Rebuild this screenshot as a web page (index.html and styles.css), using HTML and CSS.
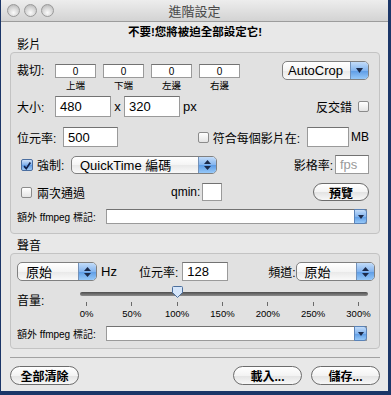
FILE: index.html
```html
<!DOCTYPE html>
<html lang="zh-Hant">
<head>
  <meta charset="UTF-8" />
  <title>進階設定</title>
  <link rel="stylesheet" href="styles.css">
</head>
<body>

  <div class="window">
    <div class="titlebar">
      <div class="lights">
        <span class="light"></span>
        <span class="light"></span>
        <span class="light"></span>
      </div>
      <div class="title">進階設定</div>
      <div></div>
    </div>

    <div class="content">
      <div class="notice">不要!您將被迫全部設定它!</div>

      <!-- 影片 -->
      <div class="group-title">影片</div>
      <div class="group">
        <div class="row crop-row">
          <span class="crop-label">裁切:</span>
          <div class="crop-fields">
            <div class="crop"><div class="field crop-field">0</div><span class="crop-name">上端</span></div>
            <div class="crop"><div class="field crop-field">0</div><span class="crop-name">下端</span></div>
            <div class="crop"><div class="field crop-field">0</div><span class="crop-name">左邊</span></div>
            <div class="crop"><div class="field crop-field">0</div><span class="crop-name">右邊</span></div>
          </div>
          <div class="popup autocrop">
            <span class="popup-text">AutoCrop</span>
            <span class="popup-arrow">
              <svg width="7" height="5" viewBox="0 0 7 5"><path d="M0 0h7L3.5 5z" fill="#1b2a4a"/></svg>
            </span>
          </div>
        </div>

        <div class="row size-row">
          <span class="size-label">大小:</span>
          <div class="field size-field">480</div>
          <span class="times">x</span>
          <div class="field size-field">320</div>
          <span class="unit">px</span>
          <span class="push">反交錯</span>
          <span class="checkbox deint"></span>
        </div>

        <div class="row bitrate-row">
          <span class="bitrate-label">位元率:</span>
          <div class="field bitrate-field">500</div>
          <div class="fit push">
            <span class="checkbox"></span>
            <span class="fit-label">符合每個影片在:</span>
            <div class="field mb-field"></div>
            <span class="mb">MB</span>
          </div>
        </div>

        <div class="row force-row">
          <span class="checkbox checked">
            <svg width="12" height="12" viewBox="0 0 12 12"><path d="M2.5 6.2l2.6 3L10 1.8" fill="none" stroke="#10204a" stroke-width="2"/></svg>
          </span>
          <span class="force-label">強制:</span>
          <div class="popup codec">
            <span class="popup-text">QuickTime 編碼</span>
            <span class="popup-arrow">
              <svg width="7" height="10" viewBox="0 0 7 10"><path d="M0 4L3.5 0 7 4zM0 6h7L3.5 10z" fill="#1b2a4a"/></svg>
            </span>
          </div>
          <span class="push">影格率:</span>
          <div class="field fps-field"><span class="placeholder">fps</span></div>
        </div>

        <div class="row pass-row">
          <span class="checkbox"></span>
          <span class="pass-label">兩次通過</span>
          <span>qmin:</span>
          <div class="field qmin-field"></div>
          <button class="button preview">預覽</button>
        </div>

        <div class="row extra-row">
          <span class="extra-label">額外 ffmpeg 標記:</span>
          <div class="field combo">
            <span class="combo-arrow">
              <svg width="6" height="4" viewBox="0 0 6 4"><path d="M0 0h6L3 4z" fill="#1b2a4a"/></svg>
            </span>
          </div>
        </div>
      </div>

      <!-- 聲音 -->
      <div class="group-title audio-title">聲音</div>
      <div class="group audio-group">
        <div class="row audio-row">
          <div class="popup rate">
            <span class="popup-text">原始</span>
            <span class="popup-arrow">
              <svg width="7" height="10" viewBox="0 0 7 10"><path d="M0 4L3.5 0 7 4zM0 6h7L3.5 10z" fill="#1b2a4a"/></svg>
            </span>
          </div>
          <span class="hz">Hz</span>
          <span class="abitrate-label">位元率:</span>
          <div class="field abitrate-field">128</div>
          <span class="channel-label">頻道:</span>
          <div class="popup channel">
            <span class="popup-text">原始</span>
            <span class="popup-arrow">
              <svg width="7" height="10" viewBox="0 0 7 10"><path d="M0 4L3.5 0 7 4zM0 6h7L3.5 10z" fill="#1b2a4a"/></svg>
            </span>
          </div>
        </div>

        <div class="row volume-row">
          <span class="volume-label">音量:</span>
          <div class="slider">
            <div class="track"></div>
            <svg class="thumb" width="11" height="12" viewBox="0 0 11 12">
              <path d="M1.5 0.5h8a1 1 0 0 1 1 1v5L5.5 11.5 0.5 6.5v-5a1 1 0 0 1 1-1z" fill="#d6e6fa" stroke="#4c6f9c"/>
            </svg>
            <div class="ticks">
              <div class="tick-col"><span class="tick"></span><span class="tick-label">0%</span></div>
              <div class="tick-col"><span class="tick"></span><span class="tick-label">50%</span></div>
              <div class="tick-col"><span class="tick"></span><span class="tick-label">100%</span></div>
              <div class="tick-col"><span class="tick"></span><span class="tick-label">150%</span></div>
              <div class="tick-col"><span class="tick"></span><span class="tick-label">200%</span></div>
              <div class="tick-col"><span class="tick"></span><span class="tick-label">250%</span></div>
              <div class="tick-col"><span class="tick"></span><span class="tick-label">300%</span></div>
            </div>
          </div>
        </div>

        <div class="row extra-row audio-extra">
          <span class="extra-label">額外 ffmpeg 標記:</span>
          <div class="field combo">
            <span class="combo-arrow">
              <svg width="6" height="4" viewBox="0 0 6 4"><path d="M0 0h6L3 4z" fill="#1b2a4a"/></svg>
            </span>
          </div>
        </div>
      </div>

      <hr class="separator">

      <div class="footer">
        <button class="button">全部清除</button>
        <button class="button load">載入...</button>
        <button class="button save">儲存...</button>
      </div>
    </div>
  </div>

</body>
</html>
```

FILE: styles.css
```css
:root {
  --window-bg: #e8e8e8;
  --group-bg: #e1e1e1;
  --group-border: #c3c3c3;
  --field-border: #9a9a9a;
  --font-main: "Liberation Sans", "Noto Sans CJK TC", sans-serif;
}

body {
  margin: 0;
  background: #1b3668;
  font-family: var(--font-main);
  font-size: 12px;
  color: #000;
}

.window {
  margin-left: 1px;
  width: 387px;
  height: 391px;
  background: var(--window-bg);
  overflow: hidden;
}

/* barre de titre */
.titlebar {
  height: 21px;
  border-bottom: 1px solid #9c9c9c;
  background: linear-gradient(#ededed, #d3d3d3);
  display: grid;
  grid-template-columns: 1fr auto 1fr;
  align-items: center;
}

.lights {
  display: flex;
  gap: 4px;
  padding-left: 6px;
}

.light {
  width: 11px;
  height: 11px;
  border-radius: 50%;
  border: 1px solid #9a9a9a;
  background: radial-gradient(circle at 50% 70%, #fbfbfb, #d0d0d0 60%, #ababab);
}

.title {
  color: #4a4a4a;
  font-size: 13px;
}

.content {
  padding: 0 8px 0 9px;
}

.notice {
  margin-top: 3px;
  text-align: center;
  font-weight: bold;
  font-size: 11.5px;
  line-height: 14px;
}

.group-title {
  line-height: 13px;
  padding-left: 7px;
}

.audio-title {
  margin-top: 6px;
}

.group {
  border: 1px solid var(--group-border);
  border-radius: 4px;
  background: var(--group-bg);
  padding: 8px 10px 9px 6px;
}

.audio-group {
  padding-bottom: 7px;
}

.row {
  display: flex;
  align-items: center;
}

.row span,
.row div {
  white-space: nowrap;
  flex-shrink: 0;
}

.push {
  margin-left: auto;
}

/* champs */
.field {
  box-sizing: border-box;
  background: #fff;
  border: 1px solid var(--field-border);
  border-top-color: #727272;
  font-size: 13px;
  padding-left: 4px;
  display: flex;
  align-items: center;
}

.placeholder {
  color: #9a9a9a;
}

.checkbox {
  box-sizing: border-box;
  width: 11px;
  height: 11px;
  border: 1px solid #8b8b8b;
  border-radius: 2px;
  background: linear-gradient(#fff, #e4e4e4);
}

.checkbox.checked {
  width: 12px;
  height: 12px;
  margin-left: 4px;
  border-color: #4a6ea0;
  background: linear-gradient(#cfe2fa, #7fb0ec 50%, #5f9ae3 51%, #9fcaf6);
  display: flex;
}

.popup {
  box-sizing: border-box;
  display: flex;
  align-items: center;
  border: 1px solid #808080;
  border-radius: 5px;
  background: linear-gradient(#fff, #f4f4f4 50%, #e8e8e8 51%, #f9f9f9);
  overflow: hidden;
  font-size: 13px;
}

.popup-text {
  flex: 1;
  padding-left: 8px;
}

.popup-arrow {
  width: 17px;
  align-self: stretch;
  border-left: 1px solid #7391b8;
  background: linear-gradient(#c3dcf9, #84b5ef 50%, #5c9be5 51%, #96c8f8);
  display: flex;
  align-items: center;
  justify-content: center;
}

.button {
  box-sizing: border-box;
  height: 19px;
  width: 69px;
  padding: 0;
  border: 1px solid #6c6c6c;
  border-radius: 10px;
  background: linear-gradient(#fff, #f3f3f3 50%, #e3e3e3 51%, #f7f7f7);
  font-family: var(--font-main);
  font-size: 12px;
  font-weight: bold;
  color: #000;
}

/* ligne recadrage */
.crop-row {
  align-items: flex-start;
  height: 30px;
}

.crop-label {
  width: 38px;
  margin-top: 3px;
  line-height: 14px;
}

.crop-fields {
  display: flex;
  gap: 7px;
}

.crop {
  width: 41px;
  display: flex;
  flex-direction: column;
  align-items: center;
}

.crop-field {
  width: 41px;
  height: 14px;
  margin-top: 3px;
  font-size: 10px;
  justify-content: center;
  padding-left: 0;
}

.crop-name {
  margin-top: 2px;
  font-size: 9.5px;
  line-height: 11px;
}

.autocrop {
  margin-left: auto;
  width: 87px;
  height: 19px;
}

.autocrop .popup-text {
  padding-left: 5px;
}

/* taille */
.size-row {
  margin-top: 5px;
  height: 21px;
}

.size-label {
  width: 38px;
}

.size-field {
  width: 56px;
  height: 21px;
}

.times {
  width: 13px;
  text-align: center;
  font-size: 13px;
}

.unit {
  margin-left: 3px;
  font-size: 13px;
}

.deint {
  margin-left: 6px;
}

/* débit */
.bitrate-row {
  margin-top: 10px;
  height: 20px;
}

.bitrate-label {
  width: 46px;
}

.bitrate-field {
  width: 55px;
  height: 20px;
}

.fit {
  display: flex;
  align-items: center;
}

.fit-label {
  margin-left: 4px;
}

.mb-field {
  width: 42px;
  height: 20px;
  margin-left: 7px;
}

.mb {
  margin-left: 2px;
}

/* forcer */
.force-row {
  margin-top: 8px;
  height: 19px;
}

.force-label {
  width: 30px;
  margin-left: 4px;
}

.codec {
  width: 146px;
  height: 18px;
  margin-left: 4px;
}

.fps-field {
  width: 34px;
  height: 19px;
  margin-left: 2px;
}

/* deux passes */
.pass-row {
  margin-top: 9px;
  height: 18px;
}

.pass-row .checkbox {
  margin-left: 4px;
}

.pass-label {
  width: 134px;
  margin-left: 5px;
}

.qmin-field {
  width: 20px;
  height: 18px;
  margin-left: 2px;
}

.preview {
  margin-left: auto;
  width: 56px;
  height: 18px;
}

/* options supplémentaires */
.extra-row {
  margin-top: 8px;
  height: 15px;
}

.extra-label {
  width: 89px;
  font-size: 10px;
}

.combo {
  width: 261px;
  height: 15px;
  justify-content: flex-end;
  padding: 0;
}

.combo-arrow {
  width: 13px;
  height: 15px;
  margin: -1px -1px -1px 0;
  box-sizing: border-box;
  border: 1px solid #5a83b8;
  border-radius: 0 3px 3px 0;
  background: linear-gradient(#c3dcf9, #84b5ef 50%, #5c9be5 51%, #96c8f8);
  display: flex;
  align-items: center;
  justify-content: center;
}

/* audio */
.audio-row {
  height: 19px;
}

.rate {
  width: 80px;
  height: 19px;
}

.hz {
  margin-left: 4px;
  font-size: 13px;
}

.abitrate-label {
  margin-left: 22px;
}

.abitrate-field {
  width: 46px;
  height: 19px;
  margin-left: 4px;
}

.channel-label {
  margin-left: 40px;
}

.channel {
  margin-left: auto;
  width: 79px;
  height: 19px;
}

.volume-row {
  margin-top: 6px;
  align-items: flex-start;
}

.volume-label {
  width: 63px;
  margin-top: 7px;
  line-height: 14px;
}

.slider {
  position: relative;
  width: 288px;
}

.track {
  margin-top: 5px;
  height: 4px;
  border-radius: 2px;
  background: linear-gradient(#4e4e4e, #8c8c8c);
}

.thumb {
  position: absolute;
  left: 92px;
  top: -1px;
}

.ticks {
  display: flex;
  justify-content: space-between;
  padding: 0 9px 0 6px;
  margin-top: 6px;
}

.tick-col {
  width: 1px;
  display: flex;
  flex-direction: column;
  align-items: center;
}

.tick {
  width: 1px;
  height: 4px;
  background: #6a6a6a;
}

.tick-label {
  margin-top: 3px;
  font-size: 9.5px;
  line-height: 10px;
}

.audio-extra {
  margin-top: 7px;
}

.separator {
  margin: 8px 0 0;
  border: none;
  height: 1px;
  background: #a2a2a2;
}

.footer {
  display: flex;
  margin-top: 8px;
}

.load {
  margin-left: auto;
}

.save {
  margin-left: 9px;
}
```
